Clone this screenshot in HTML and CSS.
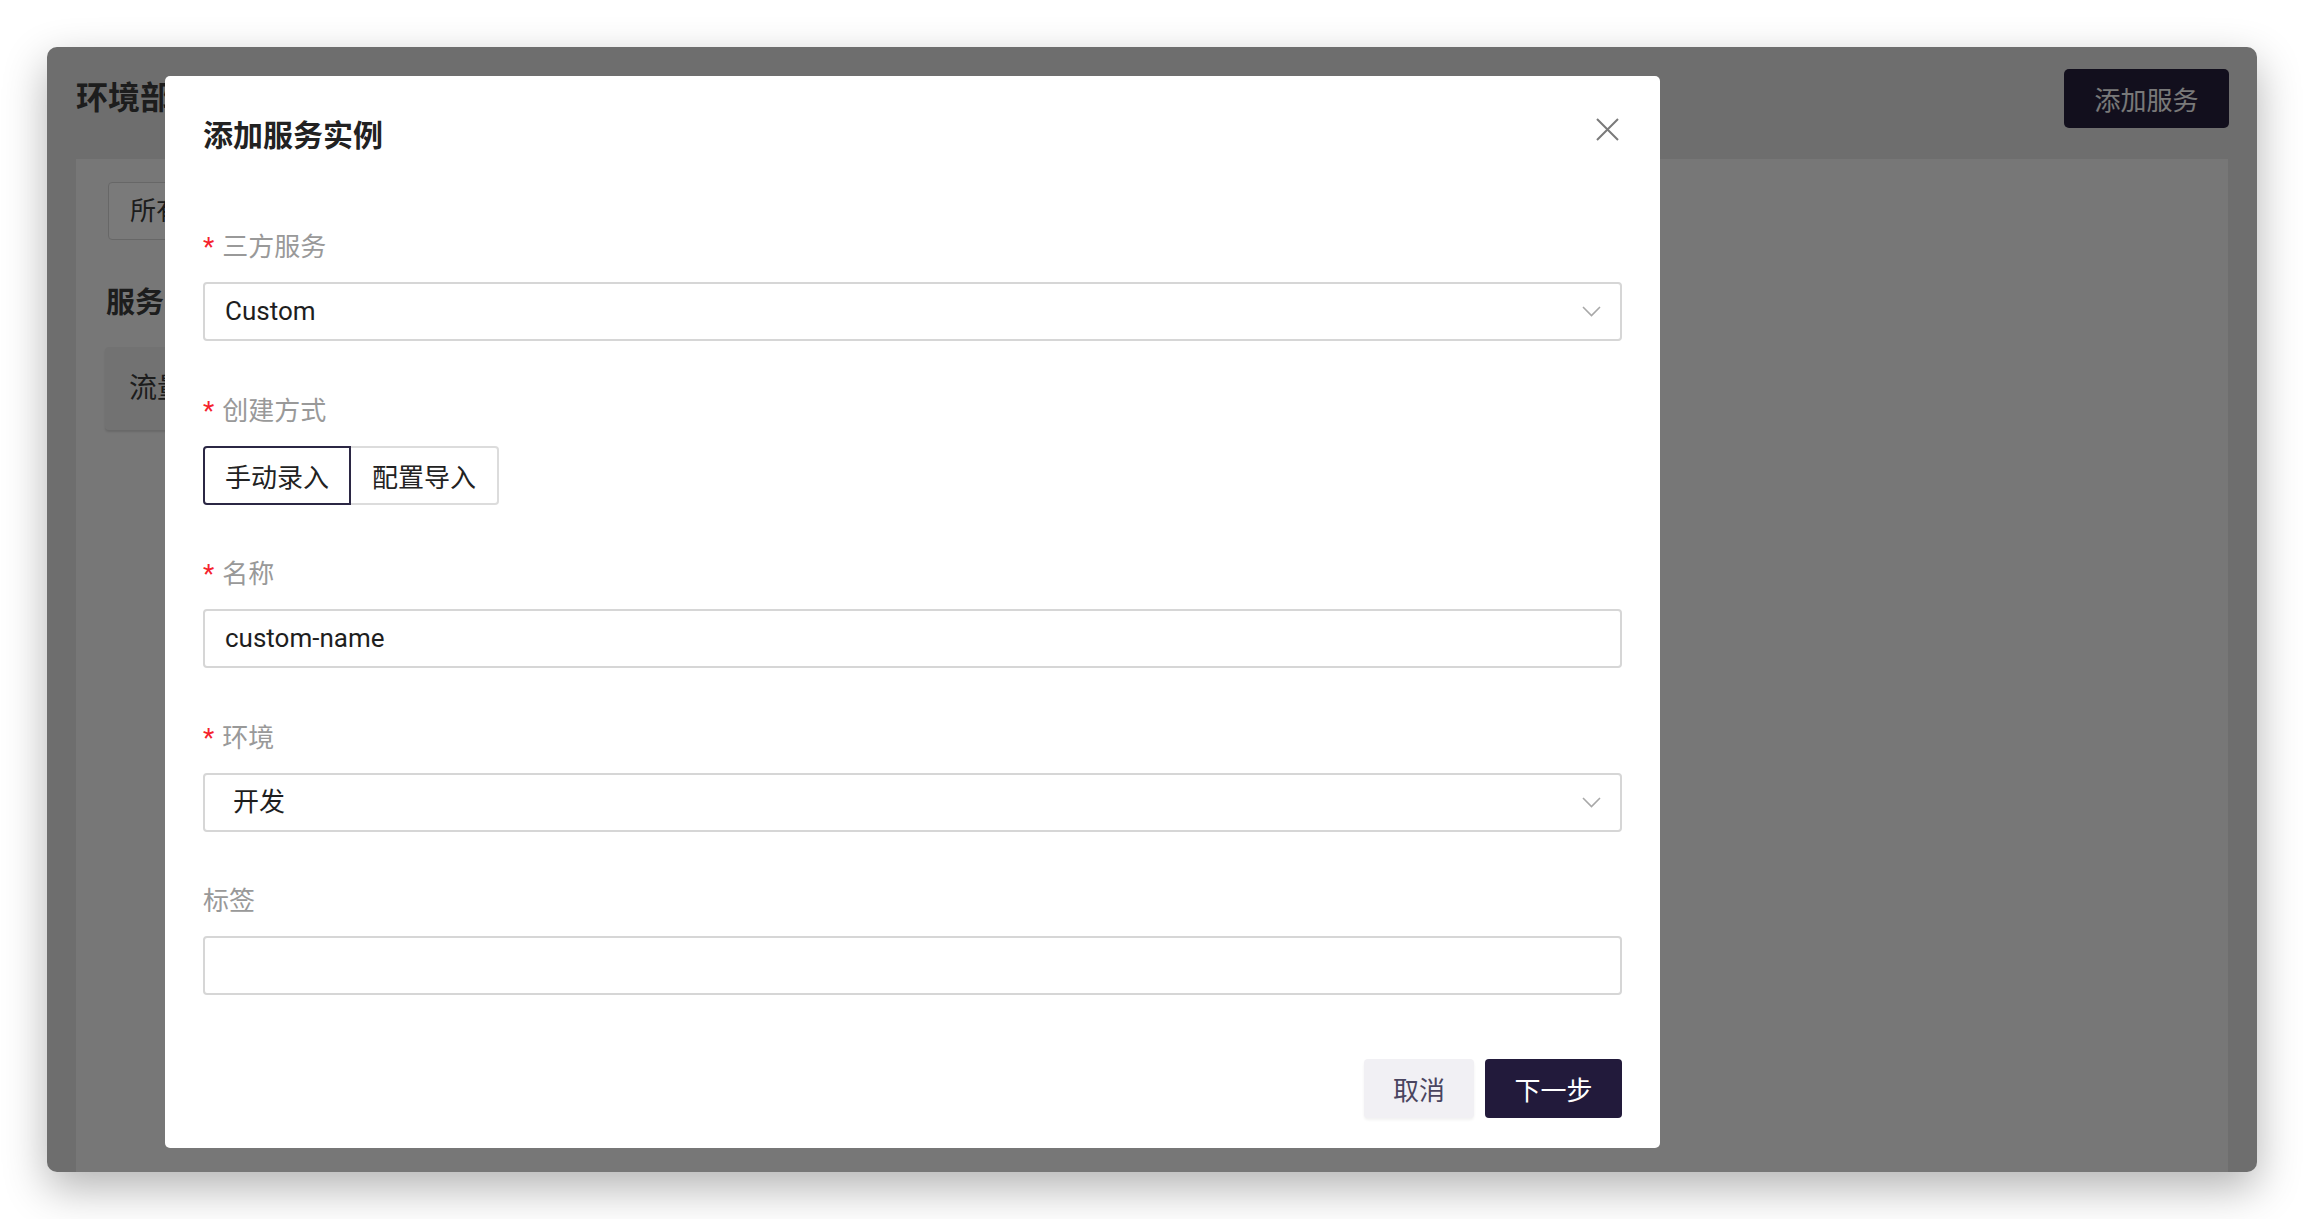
FILE: index.html
```html
<!DOCTYPE html>
<html lang="zh-CN">
<head>
    <meta charset="UTF-8">
    <meta name="viewport" content="width=device-width, initial-scale=1.0">
    <title>添加服务实例</title>
    <link rel="stylesheet" href="styles.css">
</head>
<body>

    <div class="window">
        <div class="page-header">
            <h1 class="page-title">环境部署</h1>
            <button class="btn-add">添加服务</button>
        </div>

        <div class="panel">
            <div class="filter-box">所有环境</div>
            <h2 class="section-title">服务</h2>
            <div class="service-card">流量</div>
        </div>

        <div class="overlay"></div>

        <div class="modal">
            <div class="modal-header">
                <div class="modal-title">添加服务实例</div>
                <svg class="modal-close" width="23" height="23" viewBox="0 0 23 23">
                    <path d="M1 1 L22 22 M22 1 L1 22" stroke="#7a7a7a" stroke-width="2" fill="none"/>
                </svg>
            </div>

            <div class="form">
                <div class="form-item">
                    <div class="form-label"><span class="required">*</span>三方服务</div>
                    <div class="field select">
                        <span>Custom</span>
                        <svg class="chevron" width="19" height="11" viewBox="0 0 19 11">
                            <path d="M1 1 L9.5 9.5 L18 1" stroke="#a8a8a8" stroke-width="1.6" fill="none"/>
                        </svg>
                    </div>
                </div>

                <div class="form-item">
                    <div class="form-label"><span class="required">*</span>创建方式</div>
                    <div class="segmented">
                        <button class="segment active">手动录入</button>
                        <button class="segment">配置导入</button>
                    </div>
                </div>

                <div class="form-item">
                    <div class="form-label"><span class="required">*</span>名称</div>
                    <div class="field">custom-name</div>
                </div>

                <div class="form-item">
                    <div class="form-label"><span class="required">*</span>环境</div>
                    <div class="field select select-cn">
                        <span>开发</span>
                        <svg class="chevron" width="19" height="11" viewBox="0 0 19 11">
                            <path d="M1 1 L9.5 9.5 L18 1" stroke="#a8a8a8" stroke-width="1.6" fill="none"/>
                        </svg>
                    </div>
                </div>

                <div class="form-item">
                    <div class="form-label">标签</div>
                    <div class="field"></div>
                </div>
            </div>

            <div class="modal-footer">
                <button class="btn btn-cancel">取消</button>
                <button class="btn btn-primary">下一步</button>
            </div>
        </div>
    </div>

</body>
</html>
```

FILE: styles.css
```css
body {
    margin: 0;
    padding: 47px;
    background-color: #fff;
    font-family: Roboto, "Noto Sans CJK SC", sans-serif;
    color: #222;
}
button {
    font-family: inherit;
}

/* window with the page underneath */
.window {
    position: relative;
    width: 2210px;
    height: 1125px;
    border-radius: 10px;
    overflow: hidden;
    background-color: #dcdcdc;
    box-shadow: 0 16px 44px rgba(0, 0, 0, 0.3);
    display: flex;
    flex-direction: column;
}
.page-header {
    height: 112px;
    box-sizing: border-box;
    padding: 22px 28px 0 29px;
    display: flex;
    justify-content: space-between;
    align-items: flex-start;
}
.page-title {
    margin: 0;
    font-size: 32px;
    line-height: 58px;
    font-weight: 700;
    color: #3a3a3a;
}
.btn-add {
    width: 165px;
    height: 59px;
    border: none;
    border-radius: 5px;
    background-color: #251f3a;
    color: #f2f2f2;
    font-size: 26px;
}
.panel {
    flex: 1;
    margin: 0 29px;
    padding: 23px 32px;
    background-color: #eeeeee;
}
.filter-box {
    width: 240px;
    height: 58px;
    box-sizing: border-box;
    padding-left: 21px;
    line-height: 57px;
    font-size: 26px;
    color: #3a3a3a;
    background-color: #f4f4f4;
    border: 1px solid #cfcfcf;
    border-radius: 4px;
}
.section-title {
    margin: 41px 0 0 -2px;
    font-size: 29px;
    line-height: 44px;
    font-weight: 700;
    color: #3a3a3a;
}
.service-card {
    width: 420px;
    height: 83px;
    margin: 22px 0 0 -3px;
    box-sizing: border-box;
    padding-left: 24px;
    line-height: 84px;
    font-size: 28px;
    color: #3a3a3a;
    background-color: #e4e4e4;
    border-radius: 4px;
    box-shadow: 0 2px 2px rgba(0, 0, 0, 0.12);
}
.overlay {
    position: absolute;
    inset: 0;
    background-color: rgba(0, 0, 0, 0.5);
}

/* modal */
.modal {
    position: absolute;
    left: 118px;
    top: 29px;
    width: 1495px;
    box-sizing: border-box;
    padding: 39px 38px 30px;
    background-color: #fff;
    border-radius: 5px;
}
.modal-header {
    display: flex;
    justify-content: space-between;
    align-items: flex-start;
    height: 40px;
}
.modal-title {
    font-size: 30px;
    line-height: 42px;
    font-weight: 700;
    color: #222;
}
.modal-close {
    margin-top: 3px;
    margin-right: 3px;
}
.form {
    margin-top: 71px;
}
.form-item {
    margin-bottom: 48.5px;
}
.form-item:last-child {
    margin-bottom: 0;
}
.form-label {
    font-size: 26px;
    line-height: 36px;
    padding-top: 3px;
    color: #999;
    margin-bottom: 17px;
}
.required {
    color: #f5222d;
    margin-right: 8px;
}
.field {
    height: 59px;
    box-sizing: border-box;
    border: 2px solid #d6d6d6;
    border-radius: 4px;
    padding: 0 21px 0 20px;
    font-size: 26px;
    line-height: 55px;
    color: #1e1e1e;
}
.select {
    display: flex;
    justify-content: space-between;
    align-items: center;
}
.select-cn {
    padding-left: 28px;
}
.chevron {
    margin-right: -2px;
}
.segmented {
    display: flex;
}
.segment {
    width: 148px;
    height: 59px;
    font-size: 26px;
    color: #222;
    background-color: #fff;
    border: 2px solid #dcdcdc;
    border-left: none;
    border-radius: 0 4px 4px 0;
}
.segment.active {
    border: 2px solid #2b2744;
    border-radius: 4px 0 0 4px;
}
.modal-footer {
    margin-top: 64px;
    display: flex;
    justify-content: flex-end;
    gap: 11px;
}
.btn {
    height: 59px;
    border: none;
    border-radius: 4px;
    font-size: 26px;
}
.btn-cancel {
    width: 110px;
    background-color: #f1f0f4;
    color: #4a4560;
    box-shadow: 0 2px 3px rgba(0, 0, 0, 0.06);
}
.btn-primary {
    width: 137px;
    background-color: #221a3b;
    color: #fff;
}
```
